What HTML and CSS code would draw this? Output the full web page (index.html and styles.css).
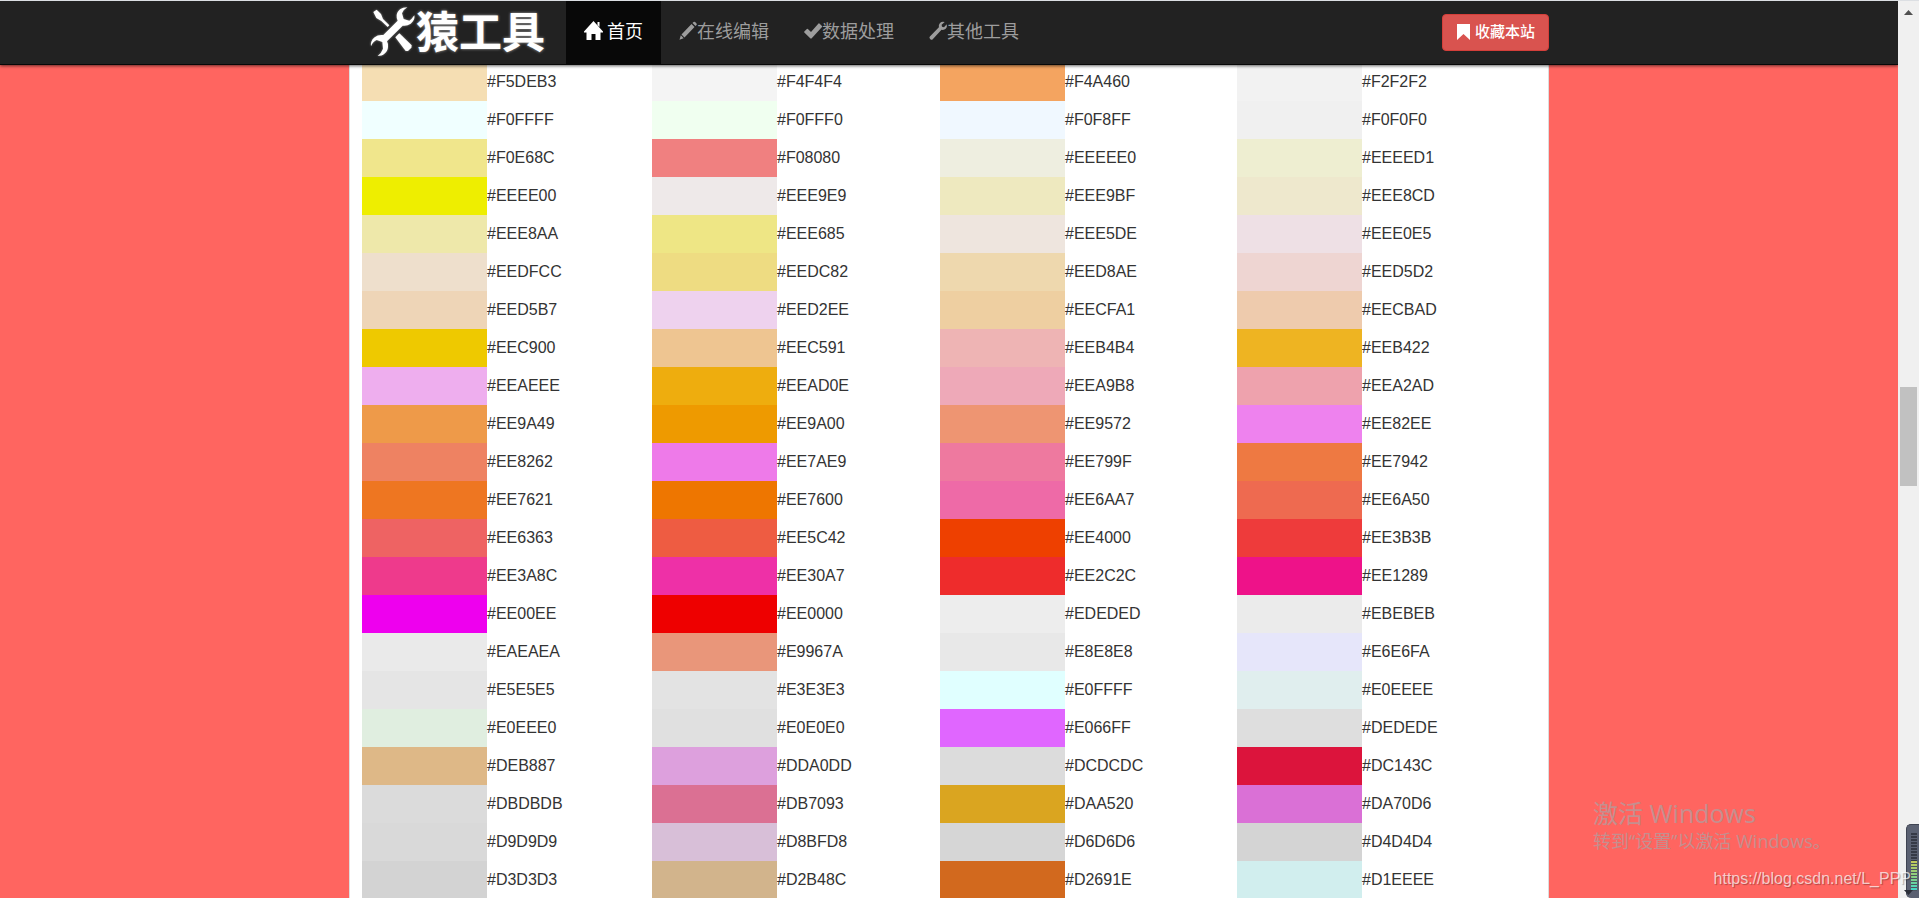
FILE: index.html
```html
<!DOCTYPE html>
<html lang="zh-CN">
<head>
<meta charset="utf-8">
<title>猿工具</title>
<link rel="stylesheet" href="styles.css">
</head>
<body>
<div class="page">
  <header class="navbar">
    <div class="navbar-inner">
      <a class="brand" href="#">
        <svg class="brand-icon" viewBox="88 18 138 156" aria-hidden="true">
          <path d="M98 36L108 29L121 42L127 57L146 76L141 81L122 63L107 54Z"/>
          <path d="M164 112L176 100L213 136L212 143L202 153L195 153Z"/>
          <path d="M200 22C182 22 171 31 168 45Q167 54 171 62L128 105Q112 103 102 112C92 120 89 130 91 139Q97 124 108 120L125 126L127 146Q122 160 111 168C127 168 141 158 142 141Q143 131 139 124L186 77Q199 79 210 71C220 63 223 54 221 46Q213 58 206 62L189 57L184 40Q189 28 200 22Z"/>
        </svg>
        <span class="brand-name">猿工具</span>
      </a>
      <nav class="menu">
        <a class="menu-link active" href="#"><svg class="icon" viewBox="0 0 18 18" aria-hidden="true"><path d="M9.500-1L19 9.500V10.500H16.500V18H11.500V12H7.500V18H2.500V10.500H0V9.500ZM13.500 0H15.500V5L13.500 3Z"/></svg> 首页</a>
        <a class="menu-link" href="#"><svg class="icon" viewBox="0 0 18 18" aria-hidden="true"><path d="M13.500 1L14.500 0Q15.300-.7 16.100.1L17.500 1.500Q18.200 2.300 17.500 3.100L16.500 4.100ZM12.500 2L15.500 5L5.500 15.500L2.500 12.500ZM1.800 13.300L4.700 16.200L.5 17.700Z"/></svg>在线编辑</a>
        <a class="menu-link" href="#"><svg class="icon" viewBox="0 0 18 18" aria-hidden="true"><path d="M14.500 1.500Q15 1.200 15.400 1.500L18 4.100Q18.300 4.500 18 4.900L7.500 16.400Q7 16.800 6.500 16.400L.3 10.500Q0 10 .3 9.600L2.900 7Q3.400 6.700 3.900 7L7 10Z"/></svg>数据处理</a>
        <a class="menu-link" href="#"><svg class="icon" viewBox="0 0 18 18" aria-hidden="true"><path d="M15.700.1L12.600 2.700L13 4.700L15 5.200L17.700 2.300Q18.500 4.900 16.700 6.800Q15 8.400 12.500 7.800L3.500 17.400Q2.500 18.200 1.400 17.200L.8 16.600Q0 15.500.9 14.500L9.900 5.300Q9.300 2.800 11 1Q13-.9 15.700.1Z"/></svg>其他工具</a>
      </nav>
      <button class="favorite" type="button"><svg class="favorite-icon" viewBox="0 0 13 16" aria-hidden="true"><path d="M0 0H13V16L6.500 10L0 16Z"/></svg>收藏本站</button>
    </div>
  </header>
  <main class="content">
    <table class="colors">
      <colgroup><col class="swatch"><col class="code-a"><col class="swatch"><col class="code-b"><col class="swatch"><col class="code-c"><col class="swatch"><col></colgroup>
      <tbody>
        <tr><td style="background:#F5DEB3"></td><td>#F5DEB3</td><td style="background:#F4F4F4"></td><td>#F4F4F4</td><td style="background:#F4A460"></td><td>#F4A460</td><td style="background:#F2F2F2"></td><td>#F2F2F2</td></tr>
        <tr><td style="background:#F0FFFF"></td><td>#F0FFFF</td><td style="background:#F0FFF0"></td><td>#F0FFF0</td><td style="background:#F0F8FF"></td><td>#F0F8FF</td><td style="background:#F0F0F0"></td><td>#F0F0F0</td></tr>
        <tr><td style="background:#F0E68C"></td><td>#F0E68C</td><td style="background:#F08080"></td><td>#F08080</td><td style="background:#EEEEE0"></td><td>#EEEEE0</td><td style="background:#EEEED1"></td><td>#EEEED1</td></tr>
        <tr><td style="background:#EEEE00"></td><td>#EEEE00</td><td style="background:#EEE9E9"></td><td>#EEE9E9</td><td style="background:#EEE9BF"></td><td>#EEE9BF</td><td style="background:#EEE8CD"></td><td>#EEE8CD</td></tr>
        <tr><td style="background:#EEE8AA"></td><td>#EEE8AA</td><td style="background:#EEE685"></td><td>#EEE685</td><td style="background:#EEE5DE"></td><td>#EEE5DE</td><td style="background:#EEE0E5"></td><td>#EEE0E5</td></tr>
        <tr><td style="background:#EEDFCC"></td><td>#EEDFCC</td><td style="background:#EEDC82"></td><td>#EEDC82</td><td style="background:#EED8AE"></td><td>#EED8AE</td><td style="background:#EED5D2"></td><td>#EED5D2</td></tr>
        <tr><td style="background:#EED5B7"></td><td>#EED5B7</td><td style="background:#EED2EE"></td><td>#EED2EE</td><td style="background:#EECFA1"></td><td>#EECFA1</td><td style="background:#EECBAD"></td><td>#EECBAD</td></tr>
        <tr><td style="background:#EEC900"></td><td>#EEC900</td><td style="background:#EEC591"></td><td>#EEC591</td><td style="background:#EEB4B4"></td><td>#EEB4B4</td><td style="background:#EEB422"></td><td>#EEB422</td></tr>
        <tr><td style="background:#EEAEEE"></td><td>#EEAEEE</td><td style="background:#EEAD0E"></td><td>#EEAD0E</td><td style="background:#EEA9B8"></td><td>#EEA9B8</td><td style="background:#EEA2AD"></td><td>#EEA2AD</td></tr>
        <tr><td style="background:#EE9A49"></td><td>#EE9A49</td><td style="background:#EE9A00"></td><td>#EE9A00</td><td style="background:#EE9572"></td><td>#EE9572</td><td style="background:#EE82EE"></td><td>#EE82EE</td></tr>
        <tr><td style="background:#EE8262"></td><td>#EE8262</td><td style="background:#EE7AE9"></td><td>#EE7AE9</td><td style="background:#EE799F"></td><td>#EE799F</td><td style="background:#EE7942"></td><td>#EE7942</td></tr>
        <tr><td style="background:#EE7621"></td><td>#EE7621</td><td style="background:#EE7600"></td><td>#EE7600</td><td style="background:#EE6AA7"></td><td>#EE6AA7</td><td style="background:#EE6A50"></td><td>#EE6A50</td></tr>
        <tr><td style="background:#EE6363"></td><td>#EE6363</td><td style="background:#EE5C42"></td><td>#EE5C42</td><td style="background:#EE4000"></td><td>#EE4000</td><td style="background:#EE3B3B"></td><td>#EE3B3B</td></tr>
        <tr><td style="background:#EE3A8C"></td><td>#EE3A8C</td><td style="background:#EE30A7"></td><td>#EE30A7</td><td style="background:#EE2C2C"></td><td>#EE2C2C</td><td style="background:#EE1289"></td><td>#EE1289</td></tr>
        <tr><td style="background:#EE00EE"></td><td>#EE00EE</td><td style="background:#EE0000"></td><td>#EE0000</td><td style="background:#EDEDED"></td><td>#EDEDED</td><td style="background:#EBEBEB"></td><td>#EBEBEB</td></tr>
        <tr><td style="background:#EAEAEA"></td><td>#EAEAEA</td><td style="background:#E9967A"></td><td>#E9967A</td><td style="background:#E8E8E8"></td><td>#E8E8E8</td><td style="background:#E6E6FA"></td><td>#E6E6FA</td></tr>
        <tr><td style="background:#E5E5E5"></td><td>#E5E5E5</td><td style="background:#E3E3E3"></td><td>#E3E3E3</td><td style="background:#E0FFFF"></td><td>#E0FFFF</td><td style="background:#E0EEEE"></td><td>#E0EEEE</td></tr>
        <tr><td style="background:#E0EEE0"></td><td>#E0EEE0</td><td style="background:#E0E0E0"></td><td>#E0E0E0</td><td style="background:#E066FF"></td><td>#E066FF</td><td style="background:#DEDEDE"></td><td>#DEDEDE</td></tr>
        <tr><td style="background:#DEB887"></td><td>#DEB887</td><td style="background:#DDA0DD"></td><td>#DDA0DD</td><td style="background:#DCDCDC"></td><td>#DCDCDC</td><td style="background:#DC143C"></td><td>#DC143C</td></tr>
        <tr><td style="background:#DBDBDB"></td><td>#DBDBDB</td><td style="background:#DB7093"></td><td>#DB7093</td><td style="background:#DAA520"></td><td>#DAA520</td><td style="background:#DA70D6"></td><td>#DA70D6</td></tr>
        <tr><td style="background:#D9D9D9"></td><td>#D9D9D9</td><td style="background:#D8BFD8"></td><td>#D8BFD8</td><td style="background:#D6D6D6"></td><td>#D6D6D6</td><td style="background:#D4D4D4"></td><td>#D4D4D4</td></tr>
        <tr><td style="background:#D3D3D3"></td><td>#D3D3D3</td><td style="background:#D2B48C"></td><td>#D2B48C</td><td style="background:#D2691E"></td><td>#D2691E</td><td style="background:#D1EEEE"></td><td>#D1EEEE</td></tr>
      </tbody>
    </table>
  </main>
</div>
<aside class="scrollbar" aria-hidden="true">
  <svg class="arrow" viewBox="0 0 9 5"><path d="M4.500 0L9 5H0Z"/></svg>
  <div class="thumb"></div>
  <svg class="arrow arrow-down" viewBox="0 0 9 5"><path d="M0 0H9L4.500 5Z"/></svg>
</aside>
<div class="gadget" aria-hidden="true"><div class="meter idle"></div><div class="meter level"></div></div>
<div class="activation">
  <p class="activation-title">激活 Windows</p>
  <p class="activation-hint">转到“设置”以激活 Windows。</p>
</div>
<p class="source-url">https://blog.csdn.net/L_PPP</p>
</body>
</html>
```
FILE: styles.css
```css
* { box-sizing: border-box; }

body {
  margin: 0;
  height: 100vh;
  display: flex;
  overflow: hidden;
  border-top: 1px solid #dcdfe3;
  font: 16px/38px "Liberation Sans", "Noto Sans CJK SC", sans-serif;
  color: #333;
}

p { margin: 0; }
svg { fill: currentColor; }

.page {
  flex: 1;
  overflow: hidden;
  background: #ff6560;
}

/* Navigation bar */
.navbar {
  position: relative;
  z-index: 1;
  background: #222;
  border-bottom: 1px solid #080808;
  box-shadow: 0 1px 3px rgba(0, 0, 0, .6);
}

.navbar-inner {
  display: flex;
  align-items: center;
  max-width: 1200px;
  height: 63px;
  margin: 0 auto;
  padding-left: 21px;
}

.brand {
  display: flex;
  align-items: center;
  width: 196px;
  padding-bottom: 2px;
  color: #fff;
  text-decoration: none;
}

.brand-icon {
  width: 46px;
  height: 52px;
  filter: drop-shadow(0 0 1px #888);
}

.brand-name {
  padding-bottom: 5px;
  font: 700 43px/56px "Noto Sans CJK SC", sans-serif;
  text-shadow: 0 0 3px #aaa;
}

.menu { display: flex; }

.menu-link {
  padding: 0 17px 0 18px;
  font: 18px/63px "Liberation Sans", "Noto Sans CJK SC", sans-serif;
  color: #9d9d9d;
  text-decoration: none;
}

.menu-link.active {
  padding-right: 18px;
  background: #080808;
  color: #fff;
}

.icon {
  width: 18px;
  height: 18px;
  vertical-align: -2px;
  overflow: visible;
}

.favorite {
  display: flex;
  align-items: center;
  gap: 5px;
  margin-left: auto;
  height: 37px;
  padding: 0 13px 2px 14px;
  border: 1px solid #d43f3a;
  border-radius: 4px;
  background: #d9534f;
  color: #fff;
  font: 500 15px/20px "Liberation Sans", "Noto Sans CJK SC", sans-serif;
}

.favorite-icon {
  width: 13px;
  height: 16px;
}

/* Colour table */
.content {
  max-width: 1200px;
  margin: -2px auto 0;
  padding: 0 12px;
  border: 1px solid #ddd;
  border-width: 0 1px;
  background: #fff;
}

.colors {
  width: 100%;
  table-layout: fixed;
  border-collapse: collapse;
}

.colors td {
  height: 38px;
  padding: 0;
}

.swatch { width: 125px; }
.code-a { width: 165px; }
.code-b { width: 163px; }
.code-c { width: 172px; }

/* Scroll bar */
.scrollbar {
  display: flex;
  flex-direction: column;
  align-items: center;
  width: 21px;
  padding: 9px 0 3px;
  background: #f0f0f0;
  color: #505050;
}

.arrow {
  width: 9px;
  height: 5px;
}

.arrow-down {
  position: relative;
  z-index: 1;
  color: #2b2e38;
}

.thumb {
  width: 17px;
  height: 99px;
  margin: 372px 0 auto;
  background: #c1c1c1;
}

/* Desktop overlays */
.gadget {
  position: absolute;
  right: 0;
  bottom: 0;
  width: 13px;
  height: 74px;
  padding: 8px 2px 0 4px;
  border: 2px solid #3f4452;
  border-width: 1px 0 0 1px;
  border-radius: 5px 0 0 5px;
  background: #5b6172;
}

.meter.idle {
  height: 28px;
  background: repeating-linear-gradient(#363a46 0 2px, #5b6172 2px 3px);
}

.meter.level {
  height: 30px;
  background:
    repeating-linear-gradient(transparent 0 2px, #4c5560 2px 3px),
    linear-gradient(#c3c95a, #7fd08a 60%, #3ed6cf);
}

.activation {
  position: absolute;
  right: 94px;
  bottom: 45px;
  width: 232px;
  color: #c48f8f;
  font-family: "Open Sans", "Noto Sans CJK SC", sans-serif;
  white-space: nowrap;
}

.activation-title {
  font-size: 25px;
  line-height: 32px;
}

.activation-hint {
  font-size: 18px;
  line-height: 24px;
}

.source-url {
  position: absolute;
  right: 8px;
  bottom: 9px;
  font-size: 16px;
  line-height: 20px;
  color: rgba(255, 255, 255, .7);
  text-shadow: 1px 1px 1px rgba(0, 0, 0, .3);
}
```
